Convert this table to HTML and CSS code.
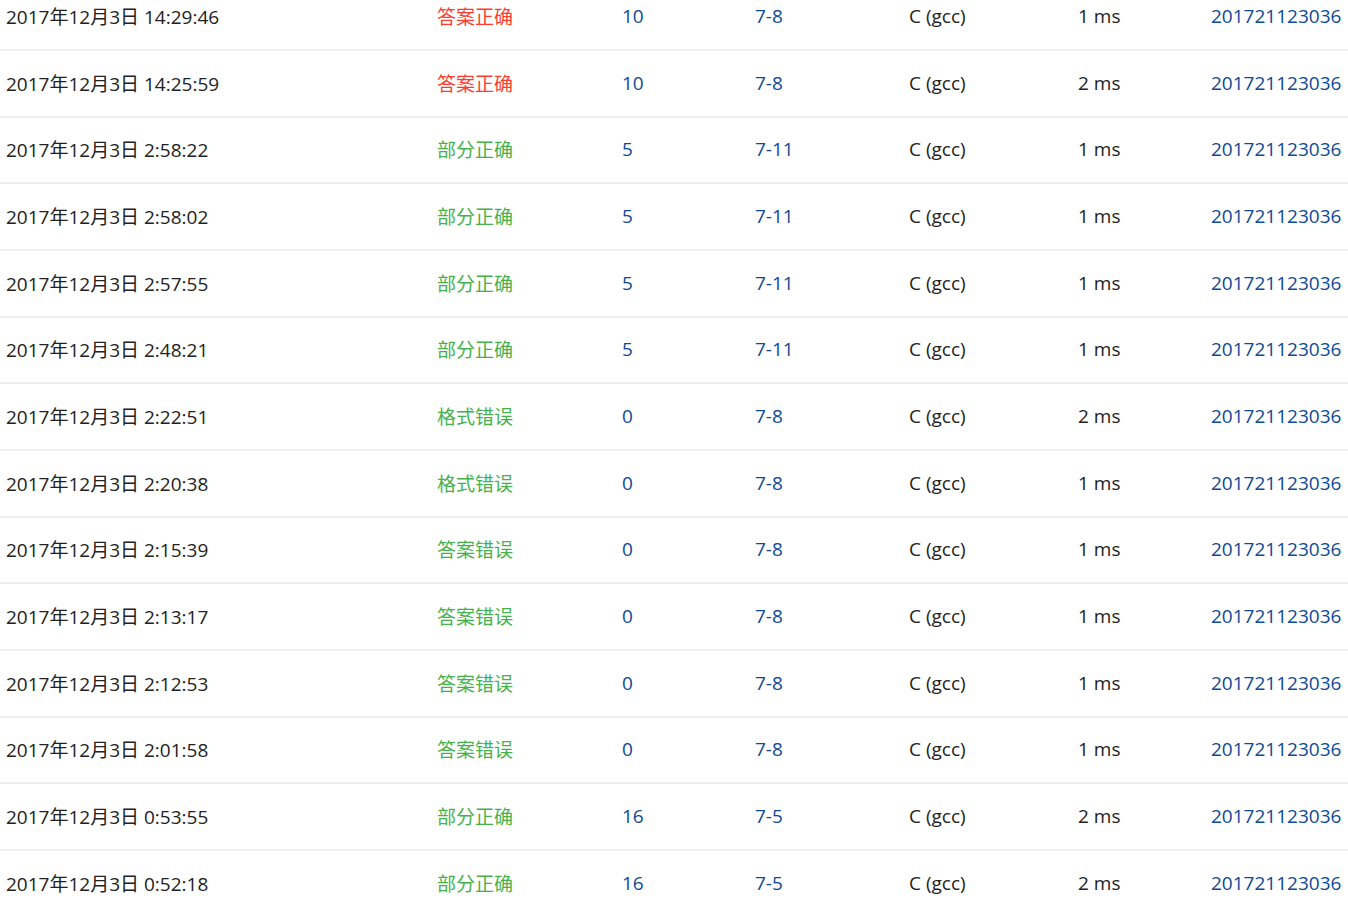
FILE: index.html
```html
<!DOCTYPE html>
<html lang="zh-CN">
<head>
<meta charset="utf-8">
<title>提交列表</title>
<link rel="stylesheet" href="styles.css">
</head>
<body>
<div class="table">
  <div class="row"><span class="c date">2017年12月3日 14:29:46</span><span class="c st red">答案正确</span><span class="c lk">10</span><span class="c lk">7-8</span><span class="c">C (gcc)</span><span class="c">1 ms</span><span class="c lk">201721123036</span></div>
  <div class="row"><span class="c date">2017年12月3日 14:25:59</span><span class="c st red">答案正确</span><span class="c lk">10</span><span class="c lk">7-8</span><span class="c">C (gcc)</span><span class="c">2 ms</span><span class="c lk">201721123036</span></div>
  <div class="row"><span class="c date">2017年12月3日 2:58:22</span><span class="c st green">部分正确</span><span class="c lk">5</span><span class="c lk">7-11</span><span class="c">C (gcc)</span><span class="c">1 ms</span><span class="c lk">201721123036</span></div>
  <div class="row"><span class="c date">2017年12月3日 2:58:02</span><span class="c st green">部分正确</span><span class="c lk">5</span><span class="c lk">7-11</span><span class="c">C (gcc)</span><span class="c">1 ms</span><span class="c lk">201721123036</span></div>
  <div class="row"><span class="c date">2017年12月3日 2:57:55</span><span class="c st green">部分正确</span><span class="c lk">5</span><span class="c lk">7-11</span><span class="c">C (gcc)</span><span class="c">1 ms</span><span class="c lk">201721123036</span></div>
  <div class="row"><span class="c date">2017年12月3日 2:48:21</span><span class="c st green">部分正确</span><span class="c lk">5</span><span class="c lk">7-11</span><span class="c">C (gcc)</span><span class="c">1 ms</span><span class="c lk">201721123036</span></div>
  <div class="row"><span class="c date">2017年12月3日 2:22:51</span><span class="c st green">格式错误</span><span class="c lk">0</span><span class="c lk">7-8</span><span class="c">C (gcc)</span><span class="c">2 ms</span><span class="c lk">201721123036</span></div>
  <div class="row"><span class="c date">2017年12月3日 2:20:38</span><span class="c st green">格式错误</span><span class="c lk">0</span><span class="c lk">7-8</span><span class="c">C (gcc)</span><span class="c">1 ms</span><span class="c lk">201721123036</span></div>
  <div class="row"><span class="c date">2017年12月3日 2:15:39</span><span class="c st green">答案错误</span><span class="c lk">0</span><span class="c lk">7-8</span><span class="c">C (gcc)</span><span class="c">1 ms</span><span class="c lk">201721123036</span></div>
  <div class="row"><span class="c date">2017年12月3日 2:13:17</span><span class="c st green">答案错误</span><span class="c lk">0</span><span class="c lk">7-8</span><span class="c">C (gcc)</span><span class="c">1 ms</span><span class="c lk">201721123036</span></div>
  <div class="row"><span class="c date">2017年12月3日 2:12:53</span><span class="c st green">答案错误</span><span class="c lk">0</span><span class="c lk">7-8</span><span class="c">C (gcc)</span><span class="c">1 ms</span><span class="c lk">201721123036</span></div>
  <div class="row"><span class="c date">2017年12月3日 2:01:58</span><span class="c st green">答案错误</span><span class="c lk">0</span><span class="c lk">7-8</span><span class="c">C (gcc)</span><span class="c">1 ms</span><span class="c lk">201721123036</span></div>
  <div class="row"><span class="c date">2017年12月3日 0:53:55</span><span class="c st green">部分正确</span><span class="c lk">16</span><span class="c lk">7-5</span><span class="c">C (gcc)</span><span class="c">2 ms</span><span class="c lk">201721123036</span></div>
  <div class="row"><span class="c date">2017年12月3日 0:52:18</span><span class="c st green">部分正确</span><span class="c lk">16</span><span class="c lk">7-5</span><span class="c">C (gcc)</span><span class="c">2 ms</span><span class="c lk">201721123036</span></div>
</div>
</body>
</html>
```
FILE: styles.css
```css
html, body {
  margin: 0;
  padding: 0;
  background: #fff;
  overflow: hidden;
}
body {
  font-family: "Open Sans", "Noto Sans CJK SC", sans-serif;
  font-size: 19px;
  color: #222;
}
.table {
  margin-top: -15.67px;
}
.row {
  display: grid;
  grid-template-columns: 431px 185px 133px 154px 169px 133px 143px;
  height: 64.67px;
  align-items: center;
  border-bottom: 2px solid #eeeeee;
}
.c {
  padding-left: 6px;
  padding-bottom: 1px;
  white-space: nowrap;
}
.red { color: #ff3b30; }
.green { color: #46b14c; }
.lk { color: #0d4a96; }
```
